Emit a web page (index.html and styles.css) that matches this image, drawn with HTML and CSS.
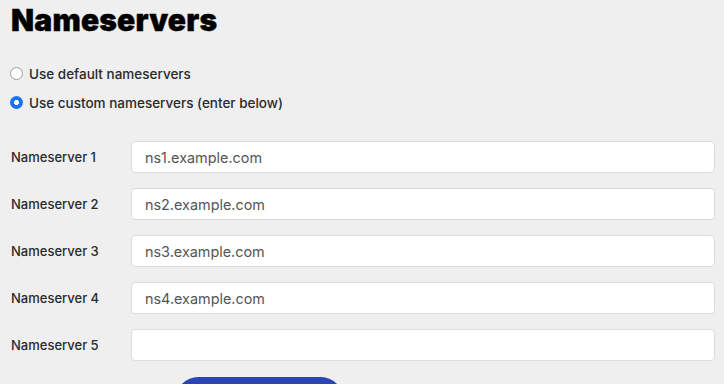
FILE: index.html
```html
<!DOCTYPE html>
<html lang="en">
<head>
<meta charset="utf-8">
<title>Nameservers</title>
<link rel="stylesheet" href="styles.css">
</head>
<body>
<main class="page">
  <h1 class="title">Nameservers</h1>
  <div class="radios">
    <label class="radio-row"><input type="radio" name="ns" class="radio"> <span>Use default nameservers</span></label>
    <label class="radio-row"><input type="radio" name="ns" class="radio" checked> <span>Use custom nameservers (enter below)</span></label>
  </div>
  <div class="fields">
    <label class="field"><span class="field-label">Nameserver 1</span><input class="field-input" type="text" value="ns1.example.com"></label>
    <label class="field"><span class="field-label">Nameserver 2</span><input class="field-input" type="text" value="ns2.example.com"></label>
    <label class="field"><span class="field-label">Nameserver 3</span><input class="field-input" type="text" value="ns3.example.com"></label>
    <label class="field"><span class="field-label">Nameserver 4</span><input class="field-input" type="text" value="ns4.example.com"></label>
    <label class="field"><span class="field-label">Nameserver 5</span><input class="field-input" type="text" value=""></label>
  </div>
  <div class="actions">
    <button class="save-btn" type="button"><span class="save-label">Save nameservers</span></button>
  </div>
</main>
</body>
</html>
```
FILE: styles.css
```css
html, body {
  margin: 0;
  padding: 0;
  background: #efefef;
  font-family: Inter, "Liberation Sans", Arial, sans-serif;
  color: #222;
}
.page {
  padding: 2px 9px 0 11px;
}
.title {
  margin: 0;
  font-size: 30px;
  line-height: 36px;
  font-weight: 900;
  color: #000;
  letter-spacing: 0.2px;
  -webkit-text-stroke: 0.4px #000;
}
.radios {
  margin-top: 21px;
  display: flex;
  flex-direction: column;
}
.radio-row {
  display: flex;
  align-items: center;
  gap: 6px;
  height: 29px;
  font-size: 13.5px;
  font-weight: 500;
  color: #2a2a2a;
}
.radio {
  appearance: none;
  -webkit-appearance: none;
  margin: 0 0 0 -1px;
  width: 13px;
  height: 13px;
  border-radius: 50%;
  border: 1px solid #9a9a9a;
  background: #fff;
  box-sizing: border-box;
}
.radio:checked {
  border: none;
  background: radial-gradient(circle, #fff 0 2.3px, #1a73f0 2.8px);
}
.fields {
  margin-top: 24px;
  display: flex;
  flex-direction: column;
  gap: 15px;
}
.field {
  display: grid;
  grid-template-columns: 120px 1fr;
  align-items: center;
}
.field-label {
  font-size: 13px;
  font-weight: 500;
  color: #2a2a2a;
}
.field-input {
  box-sizing: border-box;
  height: 32px;
  margin: 0;
  padding: 0 13px;
  border: 1.5px solid #dcdcdc;
  border-radius: 4px;
  background: #fff;
  font-family: inherit;
  font-size: 14.4px;
  color: #555;
  outline: none;
}
.actions {
  margin-top: 16px;
  padding-left: 165px;
}
.save-btn {
  width: 167px;
  height: 44px;
  padding: 10px 0 0;
  border: none;
  border-radius: 22px;
  background: #2b45b4;
  color: #fff;
  font-family: inherit;
  font-size: 14px;
  font-weight: 600;
}
```
